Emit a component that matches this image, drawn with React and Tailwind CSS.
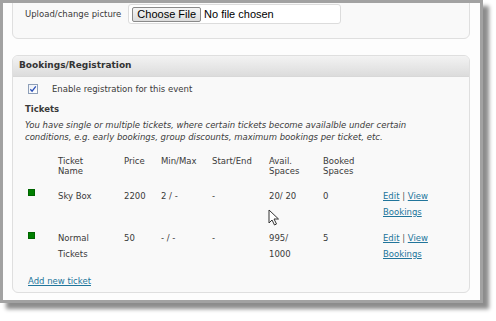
import React from "react";

const font = { fontFamily: '"DejaVu Sans", Verdana, sans-serif' };
const arial = { fontFamily: '"Liberation Sans", Arial, sans-serif' };

const tickets = [
  { name: ["Sky Box"], price: "2200", minMax: "2 / -", startEnd: "-", avail: ["20/ 20"], booked: "0", sq: "mt-[1px]" },
  { name: ["Normal", "Tickets"], price: "50", minMax: "- / -", startEnd: "-", avail: ["995/", "1000"], booked: "5", sq: "mt-[2px]" },
];

const cols = "grid grid-cols-[30px_66px_37px_51px_57px_54px_60px_1fr]";

const Cursor = () => (
  <svg className="absolute left-[268px] top-[209px]" width="12" height="17" viewBox="0 0 12 17">
    <path d="M1 1 L1 14 L4 11 L6.5 16 L8.5 15 L6 10 L10.5 10 Z" fill="#fff" stroke="#333" strokeWidth="1" strokeLinejoin="round" />
  </svg>
);

export default function App() {
  return (
    <div className="relative w-[496px] h-[321px] bg-white overflow-hidden" style={font}>
      {/* screenshot frame */}
      <div className="w-[483px] h-[303px] border-[3px] border-[#a2a2a2] bg-[#fdfdfd] overflow-hidden shadow-[6px_6px_4px_rgba(0,0,0,0.45)]">
        {/* picture box */}
        <div className="-mt-[10px] ml-[9px] w-[458px] border border-[#dfdfdf] rounded-[6px] bg-[#f9f9f9] pt-[10px] pb-[14px] pl-[12px] flex items-center text-[8.5px] text-[#3a3a3a]">
          <span className="mr-[7px]">Upload/change picture</span>
          <div className="w-[213px] h-[20px] bg-white border border-[#dcdcdc] rounded-[3px] flex items-center pl-[3px] text-[11px] text-black" style={arial}>
            <span className="h-[15px] px-[4px] flex items-center border border-[#8a8a8a] rounded-[2px] bg-gradient-to-b from-[#f6f6f6] to-[#dcdcdc] leading-none">Choose File</span>
            <span className="ml-[3px]">No file chosen</span>
          </div>
        </div>

        {/* bookings box */}
        <div className="mt-[16px] ml-[9px] w-[458px] h-[238px] border border-[#dfdfdf] rounded-[6px] bg-[#f9f9f9] overflow-hidden text-[8.5px] text-[#3a3a3a]">
          <div className="h-[21px] flex items-center pl-[6px] bg-gradient-to-b from-[#f3f3f3] to-[#dcdcdc] border-b border-[#d8d8d8] font-bold text-[9px] text-[#333]">
            Bookings/Registration
          </div>
          <div className="pl-[12px] pr-[8px]">
            <label className="mt-[6px] h-[12px] flex items-center pl-[3px]">
              <span className="w-[10px] h-[10px] border border-[#8e9fb8] bg-gradient-to-br from-[#eef1f6] to-white flex items-center justify-center">
                <svg width="8" height="8" viewBox="0 0 8 8">
                  <path d="M1.3 4.2 L3.1 6.2 L6.8 1.4" fill="none" stroke="#2a4fb8" strokeWidth="1.3" />
                </svg>
              </span>
              <span className="ml-[14px]">Enable registration for this event</span>
            </label>

            <div className="mt-[8px] leading-[12px] font-bold">Tickets</div>
            <p className="mt-[4px] leading-[12px] italic">
              You have single or multiple tickets, where certain tickets become availalble under certain
              <br />
              conditions, e.g. early bookings, group discounts, maximum bookings per ticket, etc.
            </p>

            <div className="ml-[3px]">
              <div className={`${cols} mt-[13px] leading-[10px]`}>
                <span />
                <span>Ticket<br />Name</span>
                <span>Price</span>
                <span>Min/Max</span>
                <span>Start/End</span>
                <span>Avail.<br />Spaces</span>
                <span>Booked<br />Spaces</span>
                <span />
              </div>

              {tickets.map((t, i) => (
                <div key={i} className={`${cols} leading-[16px] ${i === 0 ? "mt-[12px]" : "mt-[10px]"}`}>
                  <span className={`${t.sq} w-[7px] h-[7px] bg-[#008000] border border-[#006400]`} />
                  <span>{t.name.map((n, j) => <div key={j}>{n}</div>)}</span>
                  <span>{t.price}</span>
                  <span>{t.minMax}</span>
                  <span>{t.startEnd}</span>
                  <span>{t.avail.map((n, j) => <div key={j}>{n}</div>)}</span>
                  <span>{t.booked}</span>
                  <span>
                    <div>
                      <a className="text-[#21759b] underline">Edit</a>
                      <span className="text-[#555]"> | </span>
                      <a className="text-[#21759b] underline">View</a>
                    </div>
                    <a className="text-[#21759b] underline">Bookings</a>
                  </span>
                </div>
              ))}

              <a className="block mt-[13px] leading-[12px] text-[#21759b] underline">Add new ticket</a>
            </div>
          </div>
        </div>
      </div>
      <Cursor />
    </div>
  );
}
